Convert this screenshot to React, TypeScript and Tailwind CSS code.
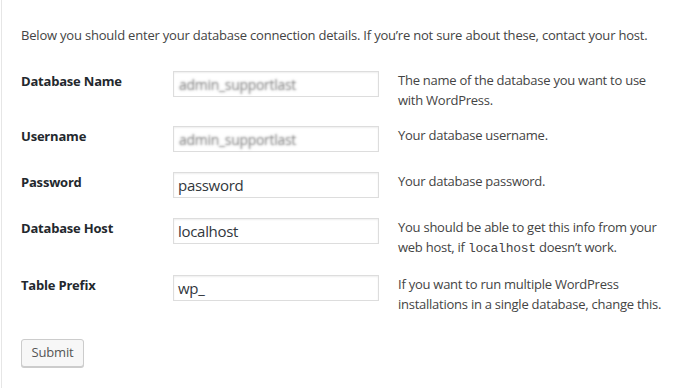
import React from 'react';

const font = { fontFamily: '"Open Sans", "Noto Sans", sans-serif' };

type Row = {
  label: string;
  value: string;
  blurred?: boolean;
  desc: React.ReactNode;
};

const rows: Row[] = [
  {
    label: 'Database Name',
    value: 'admin_supportlast',
    blurred: true,
    desc: (
      <>
        The name of the database you want to use
        <br />
        with WordPress.
      </>
    ),
  },
  {
    label: 'Username',
    value: 'admin_supportlast',
    blurred: true,
    desc: 'Your database username.',
  },
  {
    label: 'Password',
    value: 'password',
    desc: 'Your database password.',
  },
  {
    label: 'Database Host',
    value: 'localhost',
    desc: (
      <>
        You should be able to get this info from your
        <br />
        web host, if{' '}
        <code className="font-['Liberation_Mono',monospace] text-[13px]">localhost</code>{' '}
        doesn’t work.
      </>
    ),
  },
  {
    label: 'Table Prefix',
    value: 'wp_',
    desc: (
      <>
        If you want to run multiple WordPress
        <br />
        installations in a single database, change this.
      </>
    ),
  },
];

export default function App() {
  return (
    <div className="w-[700px] h-[388px] bg-white overflow-hidden" style={font}>
      <div className="ml-px h-full border-l border-[#e6e6e6] pl-[19px] pt-[25px] text-[#444]">
        <p className="text-[13px] leading-5 tracking-[-0.2px]">
          Below you should enter your database connection details. If you’re not sure about these, contact your host.
        </p>

        <div className="mt-[26px]">
          {rows.map((row) => (
            <div key={row.label} className="flex items-start">
              <div className="w-[152px] text-[13px] leading-5 font-bold text-[#23282d] tracking-[-0.2px]">
                {row.label}
              </div>
              <div className="w-[206px] h-[26px] mb-5 border border-[#ddd] bg-white shadow-[inset_0_1px_2px_rgba(0,0,0,0.07)] flex items-center px-[4px] text-[15px] text-[#32373c] tracking-[-0.3px]">
                {row.blurred ? (
                  <span className="inline-block ml-[1px] text-[14px] text-transparent [text-shadow:0_0_2.5px_#777]">
                    {row.value}
                  </span>
                ) : (
                  row.value
                )}
              </div>
              <div className="ml-[19px] -mt-px pb-4 text-[13px] leading-5 tracking-[-0.25px]">{row.desc}</div>
            </div>
          ))}
        </div>

        <button className="mt-[9px] w-[63px] h-[28px] rounded-[3px] border border-[#ccc] bg-[#f7f7f7] shadow-[0_1px_0_#ccc] text-[13px] text-[#555] tracking-[-0.2px]">
          Submit
        </button>
      </div>
    </div>
  );
}
